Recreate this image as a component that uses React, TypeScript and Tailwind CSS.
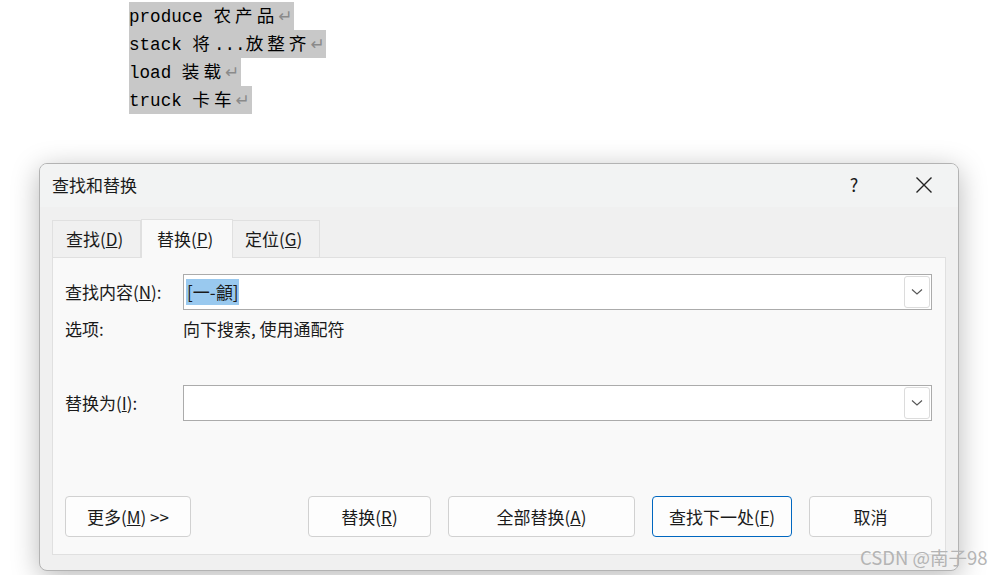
import React from "react";

const ui = "font-['Microsoft_YaHei_UI','Noto_Sans_CJK_SC',sans-serif]";

function Zh({ children }: { children: React.ReactNode }) {
  return <span className="tracking-[4px]">{children}</span>;
}

function DocLine({ children }: { children: React.ReactNode }) {
  return (
    <div className="h-[28px] flex">
      <span className="bg-[#c8c8c8] leading-[28px] whitespace-pre">
        {children}
        <span className="inline-block w-[16px] text-[#8a8a8a] text-[17px] font-['DejaVu_Sans',sans-serif]">↵</span>
      </span>
    </div>
  );
}

function Chevron() {
  return (
    <div className="w-[26px] h-[32px] mr-[1px] border border-[#dcdcdc] rounded-[3px] bg-white flex items-center justify-center">
      <svg width="12" height="8" viewBox="0 0 12 8" fill="none">
        <path d="M1 1.5 L6 6 L11 1.5" stroke="#555" strokeWidth="1.1" />
      </svg>
    </div>
  );
}

function Btn({ w, label, primary }: { w: string; label: React.ReactNode; primary?: boolean }) {
  return (
    <div
      className={`${w} h-[41px] rounded-[4px] flex items-center justify-center text-[17px] text-[#1a1a1a] bg-[#fdfdfd] border ${
        primary ? "border-[#0067c0]" : "border-[#d1d1d1]"
      }`}
    >
      {label}
    </div>
  );
}

export default function App() {
  return (
    <div className="w-[998px] h-[575px] bg-white relative overflow-hidden">
      {/* document text */}
      <div className="pl-[129px] pt-[2px] text-[17.6px] text-black font-['Liberation_Mono','Noto_Sans_CJK_SC',monospace]">
        <DocLine>produce <Zh>农产品</Zh></DocLine>
        <DocLine>stack <Zh>将</Zh>...<Zh>放整齐</Zh></DocLine>
        <DocLine>load <Zh>装载</Zh></DocLine>
        <DocLine>truck <Zh>卡车</Zh></DocLine>
      </div>

      {/* dialog */}
      <div
        className={`ml-[39px] mt-[49px] w-[920px] h-[408px] rounded-[8px] border border-[#b3b3b3] bg-[#f0f0f0] overflow-hidden shadow-[0_6px_28px_rgba(0,0,0,0.28)] ${ui}`}
      >
        <div className="h-[43px] bg-[#f2f3f3] flex items-center pl-[12px] pb-[2px] text-[17px] text-[#1a1a1a]">
          <span className="flex-1">查找和替换</span>
          <span className="w-[40px] text-center text-[18px] mr-[30px]">?</span>
          <span className="w-[40px] flex justify-center mr-[14px]">
            <svg width="18" height="18" viewBox="0 0 18 18">
              <path d="M1.5 1.5 L16.5 16.5 M16.5 1.5 L1.5 16.5" stroke="#222" strokeWidth="1.4" />
            </svg>
          </span>
        </div>

        <div className="pl-[12px] pr-[12px] pt-[12px]">
          {/* tabs */}
          <div className="flex items-end h-[38px] text-[17px] text-[#1a1a1a]">
            <div className="w-[89px] h-[37px] border border-b-0 border-[#e0e0e0] bg-[#f0f0f0] flex items-center pl-[13px]">
              查找(<u>D</u>)
            </div>
            <div className="w-[92px] h-[39px] -mb-[1px] border border-b-0 border-[#e0e0e0] bg-[#f9f9f9] flex items-center pl-[15px] relative z-10">
              替换(<u>P</u>)
            </div>
            <div className="w-[87px] h-[37px] border border-b-0 border-l-0 border-[#e0e0e0] bg-[#f0f0f0] flex items-center pl-[12px]">
              定位(<u>G</u>)
            </div>
          </div>

          {/* panel */}
          <div className="h-[298px] border border-[#e0e0e0] bg-[#f9f9f9] pl-[12px] pr-[13px] pt-[16px] text-[17px] text-[#1a1a1a]">
            <div className="flex items-center h-[36px]">
              <span className="w-[118px]">查找内容(<u>N</u>):</span>
              <div className="flex-1 h-[36px] border border-[#ababab] bg-white flex items-center pl-[2px]">
                <span className="flex-1">
                  <span className="bg-[#99c9ef] px-[1px] leading-[26px] inline-block">[一-龥]</span>
                </span>
                <Chevron />
              </div>
            </div>
            <div className="flex items-center h-[34px] mt-[2px]">
              <span className="w-[118px]">选项:</span>
              <span>向下搜索, 使用通配符</span>
            </div>
            <div className="flex items-center h-[36px] mt-[39px]">
              <span className="w-[118px]">替换为(<u>I</u>):</span>
              <div className="flex-1 h-[36px] border border-[#ababab] bg-white flex items-center justify-end">
                <Chevron />
              </div>
            </div>
            <div className="flex mt-[75px]">
              <Btn w="w-[126px]" label={<span>更多(<u>M</u>) &gt;&gt;</span>} />
              <div className="flex-1" />
              <div className="flex gap-[17px]">
                <Btn w="w-[123px]" label={<span>替换(<u>R</u>)</span>} />
                <Btn w="w-[187px]" label={<span>全部替换(<u>A</u>)</span>} />
                <Btn w="w-[140px]" primary label={<span>查找下一处(<u>F</u>)</span>} />
                <Btn w="w-[123px]" label={<span>取消</span>} />
              </div>
            </div>
          </div>
        </div>
      </div>

      <div className="absolute left-[860px] top-[544px] text-[18.5px] text-[#b4b4b4] font-['Noto_Sans_CJK_SC',sans-serif]">
        CSDN @南子98
      </div>
    </div>
  );
}
